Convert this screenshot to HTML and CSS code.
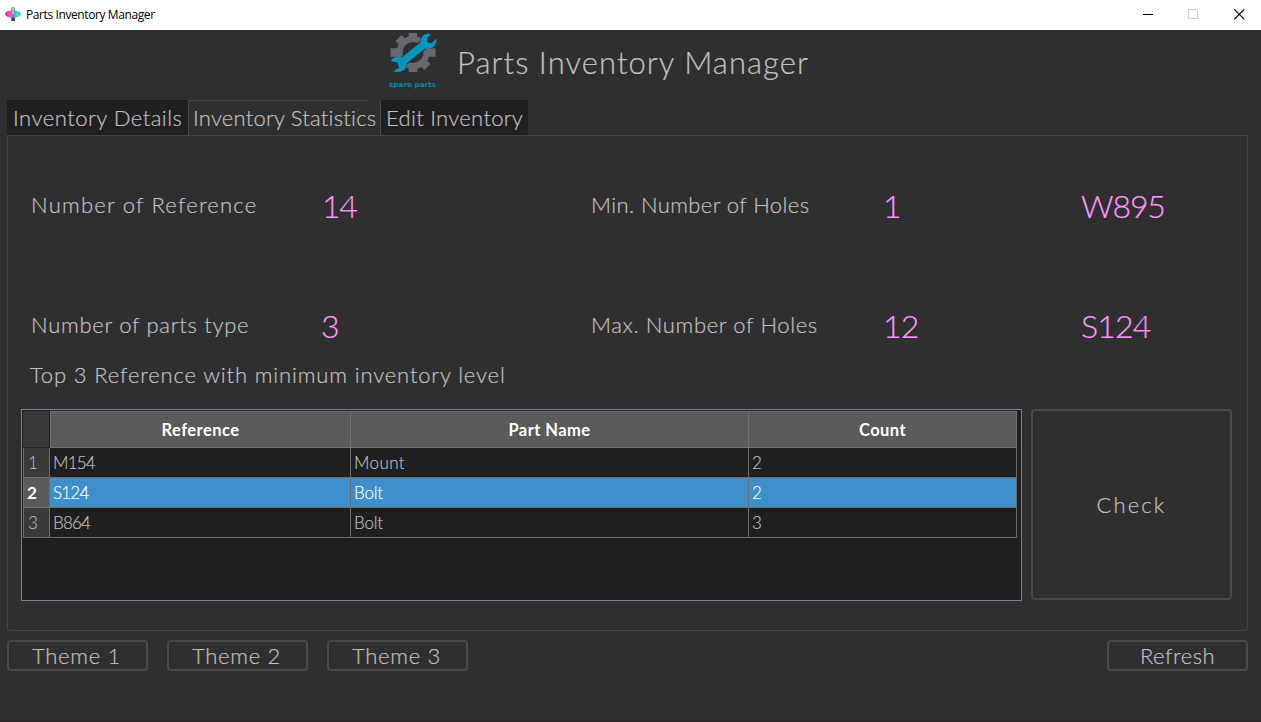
FILE: index.html
```
<!DOCTYPE html>
<html lang="en">
<head>
<meta charset="utf-8">
<title>Parts Inventory Manager</title>
<link rel="stylesheet" href="styles.css">
</head>
<body>
<div class="window">
  <header class="titlebar">
    <svg class="app-icon" width="16" height="16" viewBox="0 0 16 16">
      <defs>
        <linearGradient id="disc" x1="0" x2="1"><stop offset="0" stop-color="#ff2030"/><stop offset=".28" stop-color="#ff50d0"/><stop offset=".5" stop-color="#7a78f0"/><stop offset=".75" stop-color="#30e0e0"/><stop offset="1" stop-color="#38e050"/></linearGradient>
        <linearGradient id="pin" x1="0" x2="1"><stop offset="0" stop-color="#888"/><stop offset=".5" stop-color="#ccc"/><stop offset="1" stop-color="#888"/></linearGradient>
      </defs>
      <path d="M6.3 10h3.600v5H6.300z" fill="#3b3b50"/>
      <ellipse cx="8" cy="8" rx="8" ry="3.800" fill="url(#disc)"/>
      <rect x="6.300" y="1" width="3.600" height="7" rx=".8" fill="url(#pin)"/>
    </svg>
    <span class="caption">Parts Inventory Manager</span>
    <div class="controls">
      <svg width="11" height="11" viewBox="0 0 11 11"><path d="M1 5.500h10" stroke="#000"/></svg>
      <svg width="11" height="11" viewBox="0 0 11 11"><rect x=".5" y=".5" width="9" height="9" fill="none" stroke="#ccc"/></svg>
      <svg width="11" height="11" viewBox="0 0 11 11"><path d="M.3.3l10 10M10.300.3l-10 10" stroke="#000" stroke-width="1.1"/></svg>
    </div>
  </header>

  <div class="brand">
    <svg class="logo" width="70" height="66" viewBox="0 0 70 66">
      <g transform="translate(33 24.500)" stroke="#67696e" fill="none">
        <circle r="13.500" stroke-width="6"/>
        <path stroke-width="8.500" d="M0-14v-5.500M0 14v5.500M-14 0h-8.500M14 0h8.500M10.500-10.500l4-4M-10.500-10.500l-4-4M10.500 10.500l4 4M-10.500 10.500l-4 4"/>
      </g>
      <g stroke="#2f2f2f" stroke-width="10" fill="#2f2f2f">
        <path d="M20 36L48 13"/>
        <circle cx="19" cy="37" r="8" stroke="none"/>
        <circle cx="48" cy="12.500" r="8" stroke="none"/>
      </g>
      <path d="M21 35L47 14" stroke="#0695bd" stroke-width="7.500"/>
      <path fill="#0695bd" d="M51 6L47 10.500l.5 4 4 .5 5-4.500c1 5-3.500 10.500-9 10.500-4 0-7.500-4-7-8.500.5-4.500 5.500-8.500 10.500-6.500zM10.500 33c3-4.500 10-6 13.500-2.500 3 3 4 7 1 10.500-2.500 3-7.500 3.500-12 2.500l6-4-1.500-5z"/>
      <text class="logo-text" x="9" y="59" textLength="47" lengthAdjust="spacingAndGlyphs">spare parts</text>
    </svg>
    <h1 class="title">Parts Inventory Manager</h1>
  </div>

  <nav class="tabs">
    <div class="tab details">Inventory Details</div>
    <div class="tab active">Inventory Statistics</div>
    <div class="tab edit">Edit Inventory</div>
  </nav>

  <main class="panel">
    <section class="stats">
      <span class="references">Number of Reference</span><b class="reference-count">14</b><span class="min-holes">Min. Number of Holes</span><b>1</b><b class="min-part">W895</b>
      <span class="types">Number of parts type</span><b>3</b><span class="max-holes">Max. Number of Holes</span><b>12</b><b class="max-part">S124</b>
    </section>
    <h2 class="subtitle">Top 3 Reference with minimum inventory level</h2>
    <section class="lower">
      <div class="table-frame">
        <div class="table">
          <div class="corner"></div><div class="th">Reference</div><div class="th">Part Name</div><div class="th">Count</div>
          <div class="rh">1</div><div class="td code">M154</div><div class="td">Mount</div><div class="td">2</div>
          <div class="rh sel">2</div><div class="td code sel">S124</div><div class="td bolt sel">Bolt</div><div class="td sel">2</div>
          <div class="rh">3</div><div class="td code">B864</div><div class="td bolt">Bolt</div><div class="td">3</div>
        </div>
      </div>
      <button class="btn check">Check</button>
    </section>
  </main>

  <footer class="actions">
    <button class="btn theme">Theme 1</button>
    <button class="btn theme">Theme 2</button>
    <button class="btn theme">Theme 3</button>
    <button class="btn refresh">Refresh</button>
  </footer>
</div>
</body>
</html>
```
FILE: styles.css
```
* { box-sizing: border-box; }
body { margin: 0; background: #2f2f2f; font-family: "Century Gothic", Lato, sans-serif; font-weight: 300; color: #c0c0c0; }
.window { width: 1261px; height: 722px; display: flex; flex-direction: column; overflow: hidden; border-bottom: 1px solid #231e22; white-space: nowrap; }

.titlebar { height: 30px; flex: none; background: #fff; color: #000; display: flex; align-items: center; padding: 0 16px 2px 5px; }
.caption { margin-left: 5px; font: 400 12px/16px "Segoe UI", "Open Sans", sans-serif; letter-spacing: -.4px; padding-top: 2px; }
.controls { margin-left: auto; display: flex; gap: 35px; }

.brand { height: 70px; flex: none; display: flex; padding-left: 380px; }
.logo { flex: none; margin-top: -2px; }
.logo-text { font: 700 7px "DejaVu Sans", sans-serif; fill: #0788ac; }
.title { margin: 0 0 0 5px; font-size: 31px; font-weight: 300; line-height: 64px; letter-spacing: 1.05px; padding-left: 2px; }

.title, .tabs, .stats, .subtitle, .btn { -webkit-text-stroke: .2px; }

.tabs { height: 35px; flex: none; display: flex; margin-left: 7px; font-size: 22px; line-height: 35px; }
.tab { background: #1f1f1f; padding-left: 6px; }
.details { width: 181px; letter-spacing: .5px; }
.active { width: 193px; padding-left: 4px; background: linear-gradient(#484848, #484848) 0 0 / 180px 1px no-repeat #2f2f2f; border-left: 1px solid #484848; border-right: 1px solid #484848; letter-spacing: .22px; }
.edit { width: 147px; padding-left: 5px; letter-spacing: .3px; }

.panel { width: 1241px; height: 496px; flex: none; margin-left: 7px; padding: 44px 0 0 13px; border: 1px solid #444; border-radius: 0 0 3px 3px; }
.stats { display: grid; grid-template-columns: 290px 270px 292px 198px auto; grid-auto-rows: 52px; row-gap: 68px; padding-left: 10px; font-size: 22px; line-height: 50px; }
.stats b { font-size: 32px; font-weight: 300; color: #ff94ff; line-height: 52px; letter-spacing: -.8px; }
.references { letter-spacing: 1.22px; }
.min-holes { letter-spacing: .4px; }
.types { letter-spacing: .72px; }
.max-holes { letter-spacing: .63px; }
.stats .reference-count { letter-spacing: -1.2px; padding-left: 1px; }
.stats .min-part { letter-spacing: -1.1px; }
.subtitle { margin: 9px 0 0 9px; font-size: 22px; font-weight: 300; line-height: 28px; letter-spacing: .85px; }
.lower { display: flex; gap: 9px; margin-top: 20px; }
.table-frame { width: 1001px; height: 192px; padding: 1px; border: 1px solid #76829a; background: #1f1f1f; }
.table { display: grid; grid-template-columns: 27px 301px 398px 268px; grid-template-rows: 37px 30px 30px 30px; width: 994px; font-size: 17px; }
.corner { background: #3a3a3a; border-bottom: 1px solid #1f1f1f; border-right: 1px solid #1f1f1f; border-radius: 3px 0 0; }
.th { background: #5a5a5a; border: 1px solid #707070; border-left-width: 0; color: #fff; font-weight: 700; font-size: 16.5px; line-height: 37px; text-align: center; letter-spacing: .45px; }
.corner + .th { border-left-width: 1px; }
.rh { background: #3a3a3a; border: 1px solid #6c6c6c; border-top-width: 0; padding-left: 4px; line-height: 30px; }
.rh.sel { background: #5a5a5a; color: #fff; font-weight: 700; padding-left: 3px; }
.td { border: 1px solid #6c6c6c; border-width: 0 1px 1px 0; padding-left: 3px; line-height: 30px; letter-spacing: .4px; -webkit-text-stroke: .15px; }
.td.code { letter-spacing: -.8px; }
.td.bolt { letter-spacing: -.2px; }
.td.sel { background: #3d8ec9; color: #fff; }

.btn { margin: 0; padding: 0; border: 2px solid #4a4a4a; border-radius: 4px; background: #2f2f2f; color: inherit; font: 300 22px/28px "Century Gothic", Lato, sans-serif; letter-spacing: .9px; }
.check { width: 201px; height: 191px; letter-spacing: 2.1px; }
.actions { display: flex; gap: 19px; margin: 9px 13px 0 7px; }
.theme, .refresh { width: 141px; height: 31px; padding-top: 1px; line-height: 26px; letter-spacing: .7px; }
.theme { padding-right: 2px; }
.refresh { margin-left: auto; letter-spacing: .5px; }
```
